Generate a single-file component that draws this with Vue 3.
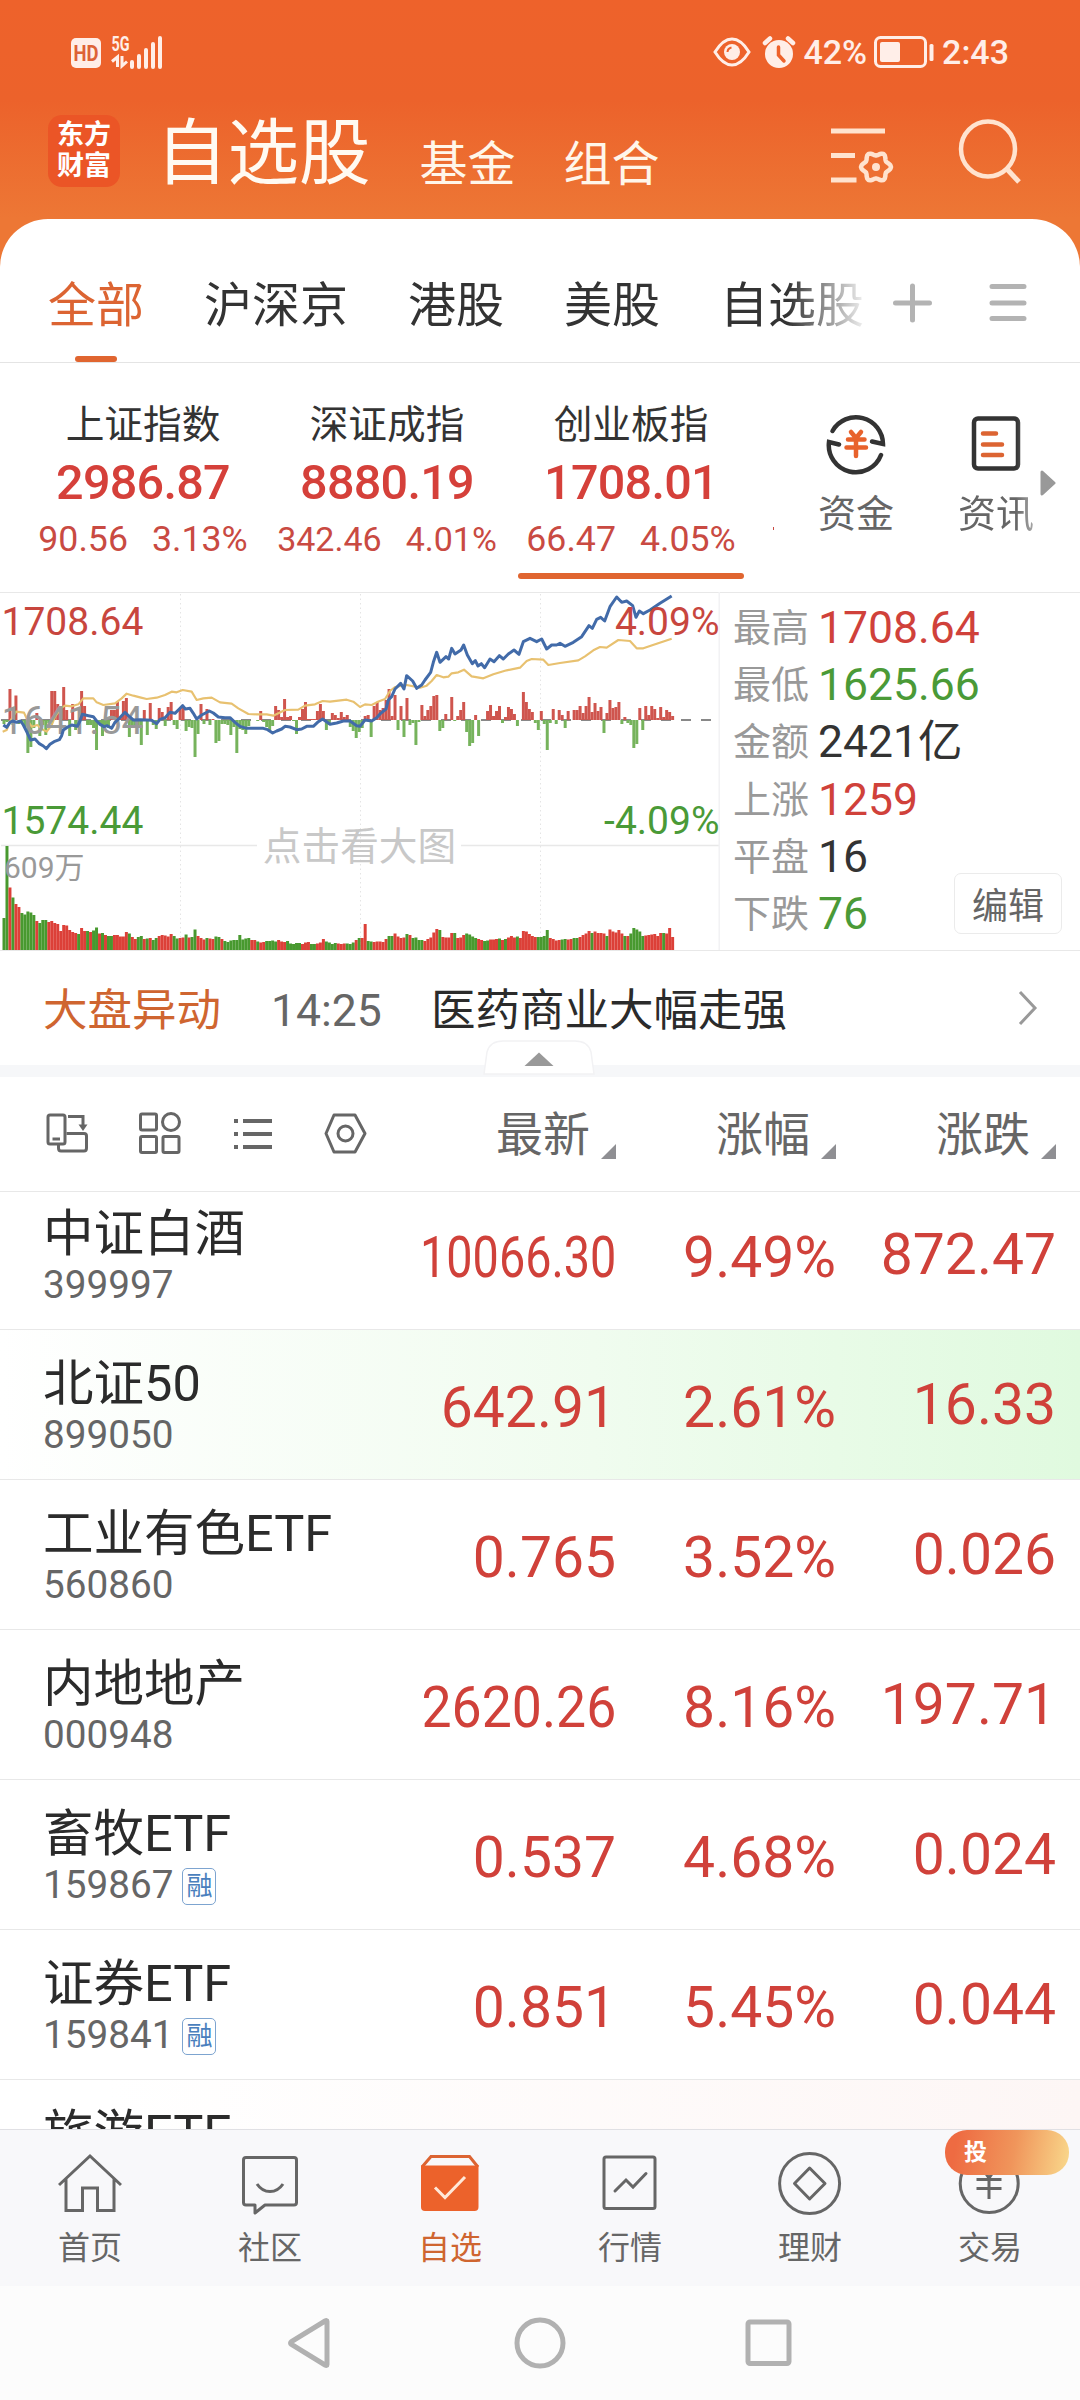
<template>
  <div class="phone">

    <!-- Status bar + title -->
    <header class="top">
      <div class="status">
        <svg class="status-left" width="100" height="40" viewBox="0 0 100 40">
          <rect x="5" y="6" width="30" height="30" rx="5" fill="#ffeee8" />
          <text x="20" y="28.500" class="hd" textLength="25" lengthAdjust="spacingAndGlyphs">HD</text>
          <text x="45.500" y="19" class="five-g" textLength="18" lengthAdjust="spacingAndGlyphs">5G</text>
          <path d="M46 29.500L51.500 25V35M56 24V34L61 29.500" stroke="#ffeee8" stroke-width="3" fill="none" />
          <path d="M66 30V35M73 24V35M80 18V35M87 12V35M94 6V35" stroke="#ffeee8" stroke-width="4" stroke-linecap="round" />
        </svg>
        <div class="status-right">
          <svg width="38" height="34" viewBox="0 0 38 34">
            <path d="M2 17 Q10 4 19 4 T36 17 Q28 30 19 30 T2 17Z" fill="none" stroke="#ffeee8" stroke-width="3" />
            <circle cx="19" cy="17" r="8" fill="#ffeee8" />
            <path d="M14.500 17 a5 5 0 0 1 4 -4.500" stroke="#ee622b" stroke-width="2" fill="none" />
          </svg>
          <svg class="alarm" width="34" height="34" viewBox="0 0 34 34">
            <circle cx="17" cy="19" r="14" fill="#ffeee8" />
            <path d="M3 8 L8 3.500 M31 8 L26 3.500" stroke="#ffeee8" stroke-width="4.500" stroke-linecap="round" />
            <path d="M16.500 12 V20 L22 26" stroke="#ee622b" stroke-width="3.500" fill="none" stroke-linecap="round" />
          </svg>
          <span class="percent">42%</span>
          <svg class="battery" width="62" height="34" viewBox="0 0 62 34">
            <rect x="2.500" y="2.500" width="50" height="29" rx="5" fill="none" stroke="#ffeee8" stroke-width="3" />
            <rect x="7" y="7" width="20" height="20" rx="2" fill="#ffeee8" />
            <rect x="56.500" y="9" width="4" height="17" rx="1.500" fill="#ffeee8" />
          </svg>
          <span>2:43</span>
        </div>
      </div>

      <div class="title-row">
        <div class="logo"><span>东方</span><span>财富</span></div>
        <h1>自选股</h1>
        <span class="sub-title">基金</span>
        <span class="sub-title">组合</span>
        <svg class="filter" width="64" height="62" viewBox="0 0 64 62">
          <path d="M1 10H55M1 34.500H25M1 59H26.500" stroke="#ffe3cf" stroke-width="5" />
          <path :d="gearPath" fill="none" stroke="#ffe3cf" stroke-width="4.500" stroke-linejoin="round" />
          <circle cx="46" cy="46" r="4" fill="#ffe3cf" />
        </svg>
        <svg class="search" width="64" height="66" viewBox="0 0 64 66">
          <ellipse cx="30" cy="31" rx="27" ry="27.500" fill="none" stroke="#ffe3cf" stroke-width="4.500" />
          <path d="M48 50 L61 64" stroke="#ffe3cf" stroke-width="5" />
        </svg>
      </div>
    </header>

    <main class="sheet">
      <!-- Group tabs -->
      <nav class="groups">
        <div class="group-list">
          <span v-for="g in groups" :key="g" :class="{ active: g === '全部' }">{{ g }}</span>
        </div>
        <svg class="group-actions" width="160" height="44" viewBox="0 0 160 44">
          <path d="M25.500 22H59.500M42.500 5V39M122 5.500H154M122 22H154M122 37.500H154" stroke="#b3b3b3" stroke-width="5" stroke-linecap="round" />
        </svg>
      </nav>

      <!-- Indices -->
      <section class="indices">
        <div v-for="ix in indices" :key="ix.name" class="index" :class="{ selected: ix.selected }">
          <div class="index-name">{{ ix.name }}</div>
          <div class="index-value">{{ ix.value }}</div>
          <div class="index-change" :class="{ small: ix.small }"><span>{{ ix.diff }}</span><span>{{ ix.pct }}</span></div>
        </div>
        <i class="dot"></i>
        <div class="shortcut funds">
          <svg width="64" height="64" viewBox="0 0 64 64" fill="none" stroke-linecap="round">
            <path d="M8.500 19 A27 27 0 0 1 59 32 L48 29.500" stroke="#333" stroke-width="4.500" />
            <path d="M57 43 A27 27 0 0 1 5 30 L15 32.500" stroke="#333" stroke-width="4.500" />
            <path d="M27 20 L32 26 L37 20 M24 27.500H40.500M22.500 35.500H42M32 26V44" stroke="#e8622c" stroke-width="4.500" />
          </svg>
          <span>资金</span>
        </div>
        <div class="shortcut news-cut">
          <svg width="64" height="64" viewBox="0 0 64 64" fill="none" stroke-linecap="round">
            <rect x="10" y="6.500" width="44" height="50" rx="4" stroke="#333" stroke-width="4.500" />
            <path d="M19 21.500H32M19 32.500H38M19 43H38" stroke="#dc6432" stroke-width="4.500" />
          </svg>
          <span>资讯</span>
        </div>
        <svg class="more" width="16" height="26" viewBox="0 0 16 26">
          <path d="M2 2 L14 13 L2 24Z" fill="#999" stroke="#999" stroke-width="3" stroke-linejoin="round" />
        </svg>
      </section>

      <!-- Intraday chart and figures -->
      <section class="market">
        <svg class="chart" width="720" height="358" viewBox="0 0 720 358">
          <path d="M180.500 2V358M360.500 2V358M540.500 2V358" stroke="#e4e4e4" stroke-width="1" stroke-dasharray="1.500 3" />
          <path d="M1 253.500H257M461 253.500H720" stroke="#e8e8e8" stroke-width="1.500" />
          <path d="M719.500 0V358" stroke="#f2f2f4" stroke-width="2" />
          <path d="M1 128H712" stroke="#888" stroke-width="2" stroke-dasharray="10 10" />
          <rect
            v-for="(b, i) in flowBars" :key="'f' + i"
            :x="b.x" :y="b.y" width="2.985" :height="b.h" :fill="b.color"
          />
          <rect
            v-for="(b, i) in volumeBars" :key="'v' + i"
            :x="b.x" :y="b.y" width="2.985" :height="b.h" :fill="b.color"
          />
          <g transform="scale(0.333333) translate(0 -21)" fill="none" stroke-linejoin="round">
            <polyline :points="average" stroke="#e8c170" stroke-width="6.500" />
          </g>
          <text x="1.500" y="142" class="axis gray">1641.54</text>
          <g transform="scale(0.333333) translate(0 -21)" fill="none" stroke-linejoin="round">
            <polyline :points="price" stroke="#426ba9" stroke-width="9" />
          </g>
          <text x="1.500" y="43" class="axis red">1708.64</text>
          <text x="1.500" y="242" class="axis green">1574.44</text>
          <text x="719.500" y="43" class="axis red end">4.09%</text>
          <text x="719.500" y="242" class="axis green end">-4.09%</text>
          <text x="4" y="286" class="vol-label">609万</text>
          <text x="359.500" y="267.500" class="hint">点击看大图</text>
        </svg>
        <div class="figures">
          <div v-for="f in figures" :key="f.label" class="figure">
            <span class="figure-label">{{ f.label }}</span>
            <span :class="f.tone">{{ f.value }}</span>
          </div>
        </div>
        <button class="edit">编辑</button>
      </section>

      <!-- Market news line -->
      <section class="alert">
        <span class="alert-title">大盘异动</span>
        <span class="alert-time">14:25</span>
        <span class="alert-text">医药商业大幅走强</span>
        <svg width="24" height="40" viewBox="0 0 24 40">
          <path d="M4 4 L19 20 L4 36" fill="none" stroke="#999" stroke-width="3" />
        </svg>
      </section>
      <div class="divider">
        <svg class="handle" width="112" height="36" viewBox="0 0 112 36">
          <path d="M1 34 L4 12 Q7 1 20 1 H92 Q105 1 108 12 L111 34Z" fill="#fff" stroke="#f2f2f4" stroke-width="1.500" />
          <path d="M41.500 26 L56 12.500 L70.500 26Z" fill="#999" />
        </svg>
      </div>

      <!-- Column titles -->
      <section class="columns">
        <svg class="tools" width="340" height="48" viewBox="0 0 340 48" fill="none" stroke="#666" stroke-width="3">
          <rect x="8" y="6" width="17" height="29" rx="2" />
          <path d="M12.500 30H20M28 7.500H43V19M26.500 24.500H44Q46.500 24.500 46.500 27V39Q46.500 42 44 42H21Q18.500 42 18.500 39V36" />
          <path d="M38.500 15.500H47.500L43 22Z" fill="#666" stroke="none" />
          <rect x="100.500" y="5" width="16" height="16" rx="1.500" />
          <circle cx="131" cy="13" r="8.500" />
          <rect x="100.500" y="27.500" width="16" height="16" rx="1.500" />
          <rect x="123" y="27.500" width="16" height="16" rx="1.500" />
          <path d="M194 12H198M203 12H232M194 25H198M203 25H232M194 38H198M203 38H232" stroke-width="4" />
          <path d="M294 6H315L325 24.500L315 43H294L286 24.500Z" stroke-linejoin="round" />
          <circle cx="305.500" cy="24.500" r="7.500" />
        </svg>
        <div v-for="c in columns" :key="c" class="column">
          <span>{{ c }}</span><i></i>
        </div>
      </section>

      <!-- Watch list -->
      <section class="list">
        <div v-for="s in stocks" :key="s.code" class="stock" :class="s.flash">
          <div class="stock-info">
            <div class="stock-name">{{ s.name }}</div>
            <div v-if="s.last" class="stock-code">
              <span>{{ s.code }}</span><span v-if="s.margin" class="tag">融</span>
            </div>
          </div>
          <div class="num"><span :style="{ transform: `scaleX(${fit(s.last)})` }">{{ s.last }}</span></div>
          <div class="num">{{ s.pct }}</div>
          <div class="num diff">{{ s.diff }}</div>
        </div>
      </section>
    </main>

    <!-- Bottom tabs -->
    <nav class="tabbar">
      <div class="tab">
        <svg class="tab-icon" viewBox="0 0 64 64">
          <path d="M1 33 L32 4 L63 33M8 27V58.500H24.500V36H39.500V58.500H56V27" />
        </svg>
        <span>首页</span>
      </div>
      <div class="tab">
        <svg class="tab-icon" viewBox="0 0 64 64">
          <path d="M8 5.500H56Q58.500 5.500 58.500 8V50.500Q58.500 53 56 53H27L17 61V53H8Q5.500 53 5.500 50.500V8Q5.500 5.500 8 5.500Z" stroke-linejoin="round" />
          <path d="M19 32 Q24 39.500 32 39.500 T45 32" />
        </svg>
        <span>社区</span>
      </div>
      <div class="tab on">
        <svg class="tab-icon" viewBox="0 0 64 64">
          <path d="M4 15 L13 4.500 H51.500 L60 15" stroke="#dc6432" />
          <path d="M3 13.500H60.500V55Q60.500 59 56.500 59H7Q3 59 3 55Z" fill="#ec622b" stroke="none" />
          <path d="M17 35.500 L27 45.500 L47 25" stroke="#ffe8d8" />
        </svg>
        <span>自选</span>
      </div>
      <div class="tab">
        <svg class="tab-icon" viewBox="0 0 64 64">
          <rect x="6" y="5" width="51" height="51.500" rx="2" />
          <path d="M17 39 L28 28 L35 35 L48 21.500" stroke-linecap="round" />
        </svg>
        <span>行情</span>
      </div>
      <div class="tab">
        <svg class="tab-icon" viewBox="0 0 64 64">
          <circle cx="31.600" cy="31.500" r="30" />
          <path d="M31.600 16L47 31.500L31.600 47L16.500 31.500Z" stroke-linejoin="round" />
        </svg>
        <span>理财</span>
      </div>
      <div class="tab">
        <svg class="tab-icon" viewBox="0 0 64 64">
          <circle cx="31.200" cy="31.500" r="29" />
          <path d="M22 13L31 26L40 13M18.500 27.500H43.500M18.500 36.500H43.500M31 26V47" />
        </svg>
        <span>交易</span>
        <div class="promo">投</div>
      </div>
    </nav>

    <!-- System keys -->
    <footer class="keys">
      <svg width="52" height="52" viewBox="0 0 52 52"><path d="M42 4.500V47.500Q42 49 40 48L6.500 27.500Q4.500 26 6.500 24.500L40 4Q42 3 42 4.500Z" /></svg>
      <svg width="52" height="52" viewBox="0 0 52 52"><circle cx="26" cy="26" r="23" /></svg>
      <svg width="52" height="52" viewBox="0 0 52 52"><rect x="5" y="5" width="41" height="41.500" rx="2" /></svg>
    </footer>
  </div>
</template>

<script setup>
const groups = ["全部", "沪深京", "港股", "美股", "自选股"]
const columns = ["最新", "涨幅", "涨跌"]

const indices = [
  { name: "上证指数", value: "2986.87", diff: "90.56", pct: "3.13%" },
  { name: "深证成指", value: "8880.19", diff: "342.46", pct: "4.01%", small: true },
  { name: "创业板指", value: "1708.01", diff: "66.47", pct: "4.05%", selected: true }
]

const figures = [
  { label: "最高", value: "1708.64", tone: "red" },
  { label: "最低", value: "1625.66", tone: "green" },
  { label: "金额", value: "2421亿", tone: "black" },
  { label: "上涨", value: "1259", tone: "red" },
  { label: "平盘", value: "16", tone: "black" },
  { label: "下跌", value: "76", tone: "green" }
]

const stocks = [
  { name: "中证白酒", code: "399997", last: "10066.30", pct: "9.49%", diff: "872.47" },
  { name: "北证50", code: "899050", last: "642.91", pct: "2.61%", diff: "16.33", flash: "down" },
  { name: "工业有色ETF", code: "560860", last: "0.765", pct: "3.52%", diff: "0.026" },
  { name: "内地地产", code: "000948", last: "2620.26", pct: "8.16%", diff: "197.71" },
  { name: "畜牧ETF", code: "159867", last: "0.537", pct: "4.68%", diff: "0.024", margin: true },
  { name: "证券ETF", code: "159841", last: "0.851", pct: "5.45%", diff: "0.044", margin: true },
  { name: "旅游ETF", code: "", last: "", pct: "", diff: "", flash: "up" }
]

// long prices are squeezed so they stay inside their column
function fit(text) {
  if (text.length > 7) return 0.82
  if (text.length > 6) return 0.94
  return 1
}

// one bar a minute
const volume = [
  32, 104, 62.5, 52.5, 46, 43, 37, 35.5, 38.5, 37.5, 35, 29, 27, 30, 30, 28, 29, 27, 26, 19,
  25, 24.5, 20, 18, 17, 16, 22, 19, 19, 18, 19.5, 22.5, 16.5, 17, 15, 14, 14, 15, 15, 13.5,
  13.5, 18, 16.5, 13, 11, 13, 14, 11, 11.5, 12, 10, 12, 14, 15, 14.5, 13.5, 16, 14, 11.5, 12,
  12.5, 15.5, 12.5, 13, 20.5, 14, 12, 10.5, 12, 11.5, 11, 13.5, 13, 11, 9, 8, 9.5, 10, 10, 15,
  10.5, 11.5, 12, 10, 10, 8.5, 7.5, 8, 9, 9, 9.5, 8.5, 10, 8.5, 8, 9, 6.5, 6, 7, 7,
  6, 7.5, 8, 6, 6, 6.5, 7.5, 11, 8.5, 7.5, 6, 7, 6.5, 6, 6.5, 6.5, 6, 7.5, 10, 12,
  12, 26, 9, 8.5, 8, 8.5, 8.5, 8, 11, 14, 14, 16.5, 13.5, 12, 12.5, 16, 15, 12, 12.5, 10,
  10, 9, 11, 12.5, 17.5, 21, 20, 13, 12.5, 12.5, 17, 17, 12, 12.5, 15, 16.5, 15.5, 13.5, 12, 11,
  10, 9, 9.5, 10.5, 10.5, 11, 11.5, 10, 11, 12.5, 14, 12.5, 13.5, 12, 19, 18.5, 16, 14, 13, 13,
  13, 14, 20, 12, 11, 9.5, 10, 10.5, 11, 10.5, 11, 12, 12, 13, 15, 16.5, 19, 17, 18.5, 17,
  17, 16.5, 14, 20.5, 18.5, 17.5, 20, 16.5, 14, 14, 16.5, 22, 20.5, 18.5, 14, 14.5, 15, 15.5, 16, 14,
  17, 17, 16.5, 22, 13
]

const volumeSide =
  "ggrgrrgggg" + "grgggrrrrr" + "rrrrrgrrgr" + "ggrgrggrrr" + "rrgrrggrgr" +
  "ggrrrrrggr" + "rgrggrrrgr" + "rggrgggggg" + "gggrrgrrgg" + "ggrrrggggg" +
  "rrrggrrrgg" + "ggrrrgggrg" + "rrggrrrrrg" + "grrrrgrggg" + "grrrrrgrrr" +
  "rgrrrggggr" + "rggrrrgrgr" + "rrgrrrrrrg" + "gggrrrrggr" + "rggrrrrgrr" +
  "rrgrrrrrgr" + "gggggrrrrr" + "rgrrr"

// minute momentum, positive above the zero line
const flow = [
  -4, -2, 31, -5, 24.5, -4, -3, -7, -33, -27, -8, 7, -16, -5, -15, -3, 29, 29, 16, 13,
  33, 10, -16, 16, -10, -7, 29, 14, -5, -5, -8, -30, -3, -16, -6, -8, 10, 10, 18, 3,
  19, 22, -17, -7, -8, -6, -25, 10, -15, 17, -5, -9, 12, 8, -6, 13, 18, -5, -9, 12,
  13, -11, -7, -8, -37, -14, 16, -4, 11, -5, 1, -23, -21, -4, -4, -5, -15, -7, -33, -9,
  -10, -14, -6, 0, 0, -1, 9, -2, -7, -12, -6, 14, 10, 3, 21, 3, 4, -1, -14, 3,
  11, 18, 1, 1, 1, 9, 16, 9, -10, -5, 7, 5, 2, 8, 3, 5, -7, -11, -18, -12,
  -8, 4, 5, -17, 14, 18, 10, 12, 20, 31, 4, 25, -10, 14, -17, 22, -5, -3, -25, -2,
  15, 4, 10, 14, 24, 25, -11, -8, 6, 0, 23, -1, 4, 10, 18, -12, -26, -23, 5, -16,
  0, 0, 9, 15, 4, 9, 14, -3, 3, 13, 11, 6, -6, 0, 28, 18, 11, 8, -3, -10,
  9, -4, -30, -3, 11, -4, 10, 5, -8, 9, 0, 10, 10, 14, 7, 14, 23, 8, 17, 9,
  13, -13, 7, 20, 12, 13, 18, -4, 3, -3, -5, -28, -24, 12, -10, 14, 5, 14, 11, 2,
  13, 3, 10, 8, 4
]

const step = 2.985

const volumeBars = volume.map((h, i) => ({
  x: 2.5 + i * step,
  y: 358 - h,
  h,
  color: volumeSide[i] === "r" ? "#dc4038" : "#48992f"
}))

const flowBars = flow.map((v, i) => ({
  x: 2.5 + i * step,
  y: v > 0 ? 128 - v : 128,
  h: Math.abs(v),
  color: v > 0 ? "#cf554e" : "#76b35c"
}))

const price = "10,420 20,427 30,412 38,408 50,412 62,408 70,420 80,440 92,465 105,462 118,476 130,483 139,491 150,478 162,470 178,464 185,452 190,435 200,428 215,420 232,424 240,408 247,388 265,392 280,395 290,408 300,418 312,425 322,422 335,430 345,412 358,400 375,382 385,392 400,405 420,404 440,405 455,406 470,416 480,403 495,398 510,382 525,385 538,372 548,362 556,372 570,370 580,385 590,402 605,390 628,378 640,384 655,396 675,398 690,398 705,412 720,424 740,430 770,430 790,430 803,434 818,444 830,438 845,432 855,424 870,426 890,434 905,432 920,424 940,424 955,410 968,402 990,418 1010,414 1030,408 1050,408 1070,422 1080,424 1095,405 1115,408 1130,398 1142,385 1158,372 1165,345 1175,335 1185,312 1202,295 1212,312 1220,272 1238,288 1250,310 1265,300 1275,285 1292,262 1300,232 1310,202 1320,232 1338,215 1346,222 1355,190 1365,207 1383,195 1391,180 1402,210 1417,236 1426,227 1434,243 1444,236 1454,248 1470,222 1482,230 1498,212 1510,222 1525,207 1542,195 1557,208 1570,170 1590,160 1610,170 1625,162 1640,192 1655,180 1670,180 1680,175 1695,184 1720,172 1745,155 1767,122 1777,130 1790,103 1802,97 1814,108 1830,65 1850,36 1865,52 1880,48 1898,62 1908,97 1918,78 1930,86 1950,75 1980,55 2015,33"

const average = "8,440 20,435 30,410 48,380 72,383 82,405 95,425 112,420 125,432 140,440 155,420 165,395 185,368 195,362 215,364 235,358 250,340 280,340 290,352 310,360 345,355 365,340 380,326 400,332 420,337 440,342 470,338 495,330 515,320 530,322 548,315 575,320 590,345 610,340 635,338 660,352 695,356 715,370 745,387 770,388 800,388 820,392 855,375 895,374 915,362 945,358 968,348 990,350 1040,344 1060,350 1080,366 1095,358 1115,360 1130,352 1155,342 1170,318 1185,306 1220,300 1260,308 1280,302 1295,288 1310,270 1330,277 1345,275 1355,265 1375,262 1392,254 1415,274 1450,280 1480,268 1520,256 1560,248 1580,228 1595,222 1630,224 1645,240 1680,234 1735,226 1755,214 1780,196 1800,186 1820,188 1855,165 1890,168 1910,190 1930,190 1970,176 2015,161"

// six-lobed cog around (46, 46)
const gearPath = Array.from({ length: 49 }, (_, i) => {
  const a = (i / 48) * Math.PI * 2
  const r = 13.2 + 1.8 * Math.cos(6 * a)
  return `${i ? "L" : "M"}${(46 + r * Math.cos(a)).toFixed(2)} ${(46 + r * Math.sin(a)).toFixed(2)}`
}).join("") + "Z"
</script>

<style>
body {
  margin: 0;
}
</style>

<style scoped>
.phone {
  width: 1080px;
  height: 2400px;
  overflow: hidden;
  display: flex;
  flex-direction: column;
  background: #fff;
  color: #2b2b2b;
  font-family: Roboto, "Noto Sans CJK SC", sans-serif;
  white-space: nowrap;
}

svg {
  display: block;
  flex: none;
}

.red {
  color: #d0413a;
  fill: #c8463e;
}

.green {
  color: #4a9a37;
  fill: #4a9a37;
}

.black {
  color: #333;
}

/* top */
.top {
  height: 270px;
  flex: none;
  background: linear-gradient(#ee622b 0, #ec622b 100px, #ed7735 219px, #ed7735 100%);
}

.status {
  height: 104px;
  display: flex;
  justify-content: space-between;
  padding: 0 71px 0 66px;
  box-sizing: border-box;
}

.status-left {
  margin-top: 32px;
}

.hd {
  font-size: 22px;
  font-weight: 700;
  text-anchor: middle;
  fill: #dd6236;
}

.five-g {
  font-size: 20px;
  font-weight: 700;
  fill: #ffeee8;
}

.status-right {
  height: 34px;
  margin-top: 35px;
  display: flex;
  align-items: center;
  color: #ffeee8;
  font-size: 34px;
  font-weight: 500;
}

.alarm {
  margin: 0 7px 0 11px;
}

.battery {
  margin: 0 7px 0 6px;
}

.title-row {
  display: flex;
  align-items: flex-start;
  padding-left: 48px;
}

.logo {
  width: 72px;
  height: 72px;
  margin-top: 11px;
  border-radius: 14px;
  background: #eb5526;
  display: flex;
  flex-direction: column;
  align-items: center;
  justify-content: center;
  color: #fff;
  font-size: 27px;
  font-weight: 700;
  line-height: 31px;
}

h1 {
  margin: 1px 0 0 36px;
  font-size: 71.5px;
  font-weight: 400;
  line-height: 98px;
  color: #fffaf2;
}

.sub-title {
  width: 96px;
  margin: 31px 0 0 49px;
  font-size: 48px;
  line-height: 60px;
  color: #fff6ea;
}

.sub-title + .sub-title {
  margin-left: 48px;
}

.filter {
  margin: 17px 0 0 170px;
}

.search {
  margin: 14px 0 0 64px;
}

/* sheet */
.sheet {
  height: 1910px;
  flex: none;
  margin-top: -51px;
  border-radius: 48px 48px 0 0;
  background: #fff;
  overflow: hidden;
}

.groups {
  height: 144px;
  box-sizing: border-box;
  border-bottom: 1px solid #e4e4e4;
  display: flex;
  padding-left: 48px;
}

.group-list {
  width: 815px;
  height: 143px;
  display: flex;
  gap: 60px;
  overflow: hidden;
  font-size: 48px;
  line-height: 174px;
  color: #333;
  -webkit-mask-image: linear-gradient(90deg, #000 740px, transparent 822px);
  mask-image: linear-gradient(90deg, #000 740px, transparent 822px);
}

.group-list .active {
  color: #dc6432;
  position: relative;
}

.group-list .active::after {
  content: "";
  position: absolute;
  left: 27px;
  top: 137px;
  width: 42px;
  height: 6px;
  border-radius: 3px;
  background: #e06530;
}

.group-actions {
  margin: 62px 0 0 7px;
}

/* indices */
.indices {
  height: 230px;
  box-sizing: border-box;
  border-bottom: 1px solid #e8e8e8;
  padding-left: 21px;
  display: flex;
}

.index {
  width: 244px;
  position: relative;
  text-align: center;
}

.index-name {
  margin-top: 38px;
  font-size: 38.7px;
  line-height: 48px;
  color: #333;
}

.index-value {
  font-size: 48.5px;
  font-weight: 500;
  line-height: 67px;
  letter-spacing: -0.7px;
  color: #d5403a;
}

.index-change {
  display: flex;
  justify-content: center;
  gap: 24px;
  font-size: 35.7px;
  line-height: 46px;
  color: #c94a42;
}

.index-change.small {
  font-size: 34px;
}

.index.selected::after {
  content: "";
  position: absolute;
  left: 9px;
  top: 210px;
  width: 226px;
  height: 6px;
  border-radius: 3px;
  background: #e06530;
}

.dot {
  width: 1px;
  height: 3px;
  margin: 164px 0 0 20px;
  background: #c94a42;
}

.shortcut {
  display: flex;
  flex-direction: column;
  align-items: center;
  margin-top: 49px;
  font-size: 38px;
  line-height: 46px;
  color: #666;
}

.shortcut span {
  margin-top: 15px;
}

.funds {
  margin-left: 44px;
}

.news-cut {
  margin-left: 64px;
  -webkit-mask-image: linear-gradient(90deg, #000 58px, rgba(0, 0, 0, 0.5) 78px);
  mask-image: linear-gradient(90deg, #000 58px, rgba(0, 0, 0, 0.5) 78px);
}

.more {
  margin: 107px 0 0 6px;
}

/* chart */
.market {
  height: 358px;
  box-sizing: border-box;
  border-bottom: 1px solid #e8e8e8;
  display: flex;
  position: relative;
}

.chart {
  margin-top: -1px;
}

.axis {
  font-size: 39px;
}

.gray {
  fill: #999;
}

.end {
  text-anchor: end;
}

.vol-label {
  font-size: 30px;
  fill: #999;
}

.hint {
  font-size: 38.7px;
  text-anchor: middle;
  fill: #c8c8c8;
}

.figures {
  padding: 7px 0 0 13px;
}

.figure {
  display: flex;
  align-items: center;
  height: 57.2px;
  line-height: 57px;
  font-size: 44.5px;
}

.figure-label {
  width: 85px;
  font-size: 38px;
  color: #999;
}

.edit {
  position: absolute;
  right: 18px;
  bottom: 16px;
  width: 108px;
  height: 61px;
  padding: 0 0 2px;
  border: 1.5px solid #ebebeb;
  border-radius: 7px;
  background: #fff;
  color: #666;
  font-family: inherit;
  font-size: 36px;
}

/* alert */
.alert {
  height: 114px;
  box-sizing: border-box;
  padding: 0 40px 0 43px;
  display: flex;
  font-size: 44.5px;
  line-height: 120px;
}

.alert-title {
  width: 228px;
  color: #cf6530;
}

.alert-time {
  width: 160px;
  color: #666;
}

.alert-text {
  flex: 1;
}

.alert svg {
  margin-top: 37px;
}

.divider {
  height: 12px;
  background: #f6f7f9;
  position: relative;
}

.handle {
  position: absolute;
  left: 483px;
  bottom: 1px;
}

/* column titles */
.columns {
  height: 115px;
  box-sizing: border-box;
  border-bottom: 1px solid #e8e8e8;
  padding: 0 24px 0 40px;
  display: flex;
}

.tools {
  margin: 32px 16px 0 0;
}

.column {
  width: 220px;
  display: flex;
  justify-content: flex-end;
  font-size: 47px;
  line-height: 116px;
  color: #666;
}

.column i {
  width: 15px;
  height: 15px;
  margin: 67px 0 0 11px;
  background: #8f8f93;
  clip-path: polygon(100% 0, 100% 100%, 0 100%);
}

/* list */
.list {
  margin-top: -12px;
}

.stock {
  height: 150px;
  box-sizing: border-box;
  border-bottom: 1px solid #e8e8e8;
  padding: 0 24px 0 43px;
  display: flex;
}

.stock.down {
  background: linear-gradient(90deg, #fff 0, #f0fcef 55%, #e0fadf 100%);
}

.stock.up {
  background: linear-gradient(90deg, #fff 10%, #fdf6f5 100%);
}

.stock-info {
  width: 353px;
  padding-top: 21px;
}

.stock-name {
  font-size: 50.5px;
  line-height: 65px;
}

.stock-code {
  display: flex;
  align-items: center;
  height: 38px;
  font-size: 38.7px;
  line-height: 38px;
  color: #666;
}

.tag {
  width: 34px;
  height: 37px;
  flex: none;
  box-sizing: border-box;
  margin: 2px 0 0 9px;
  display: flex;
  justify-content: center;
  border: 1.5px solid #7da4d0;
  border-radius: 5px;
  color: #4a7fbd;
  font-size: 26px;
  line-height: 34px;
}

.num {
  width: 220px;
  display: flex;
  justify-content: flex-end;
  font-size: 57px;
  line-height: 156px;
  height: 149px;
  color: #d0413a;
}

.num span {
  transform-origin: right center;
}

.num.diff {
  line-height: 150px;
}

/* bottom */
.tabbar {
  height: 157px;
  flex: none;
  box-sizing: border-box;
  border-top: 1px solid #e0e0e4;
  background: #f8f8fa;
  display: flex;
  position: relative;
}

.tab {
  width: 180px;
  padding-top: 22px;
  display: flex;
  flex-direction: column;
  align-items: center;
  position: relative;
  font-size: 32px;
  line-height: 40px;
  color: #666;
}

.tab-icon {
  width: 64px;
  height: 64px;
  margin-bottom: 12px;
  fill: none;
  stroke: #666;
  stroke-width: 3;
}

.tab.on {
  color: #cf6530;
}

.promo {
  position: absolute;
  left: 45px;
  top: 0;
  width: 124px;
  height: 45px;
  box-sizing: border-box;
  padding-left: 19px;
  border-radius: 22px;
  background: linear-gradient(100deg, #ee6b42 10%, #f0955b 55%, #f9d98c 100%);
  color: #fff;
  font-size: 23px;
  font-weight: 700;
  line-height: 46px;
}

.keys {
  height: 114px;
  flex: none;
  background: #fcfcfc;
  display: flex;
  justify-content: center;
  gap: 177px;
  padding-top: 31px;
  box-sizing: border-box;
}

.keys svg {
  fill: none;
  stroke: #b1b1b1;
  stroke-width: 5;
}
</style>
